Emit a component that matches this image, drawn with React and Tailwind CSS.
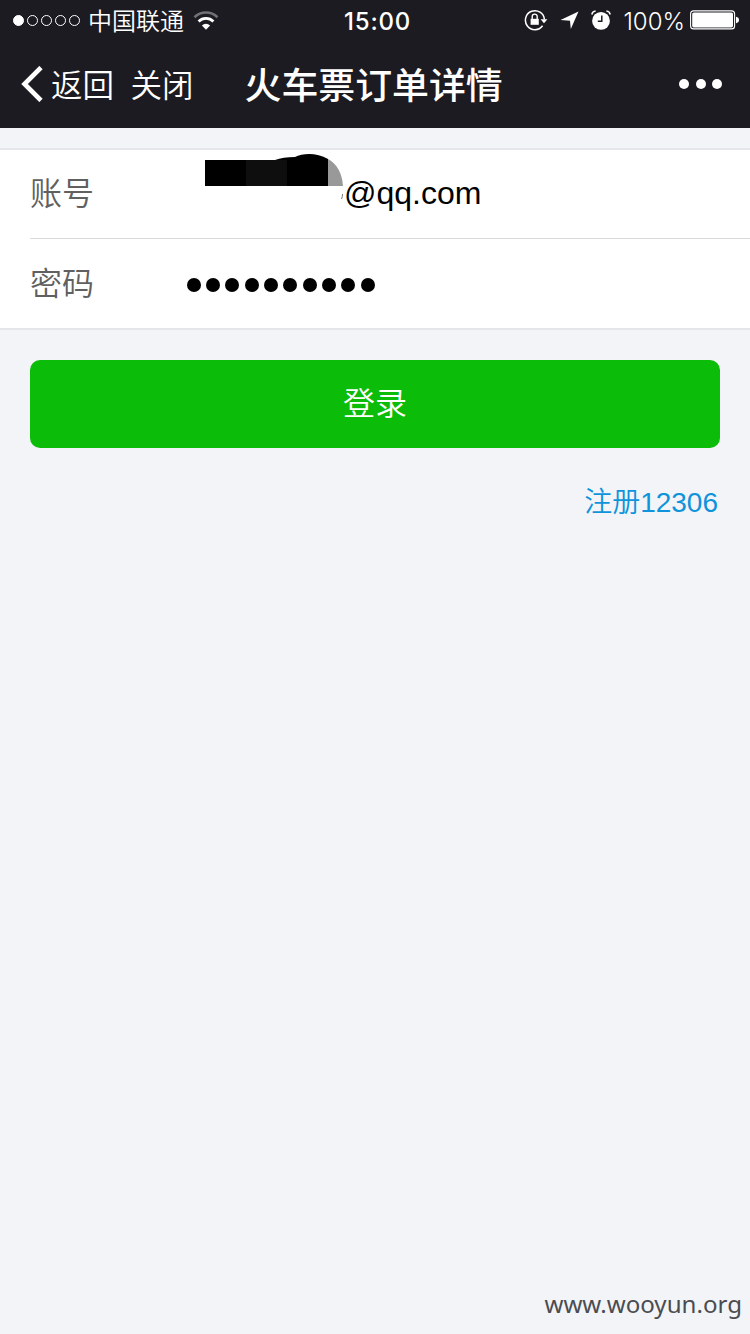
import { clsx } from "clsx";

const SIGNAL = [true, false, false, false, false];
const PASSWORD_LENGTH = 10;

export default function App() {
  return (
    <main className="flex h-[1334px] w-[750px] flex-col overflow-hidden bg-[#f2f4f8] font-['Liberation_Sans','Noto_Sans_CJK_SC',sans-serif]">
      <header className="h-32 bg-[#1c1b21] text-white">
        <StatusBar />
        <NavBar />
      </header>

      <form className="mt-5 border-y-2 border-[#e5e6e9] bg-white">
        <div className="ml-[30px] flex h-[89px] border-b border-[#d9d9d9]">
          <Label>账号</Label>
          <div className="flex pl-[79px] pt-[3px]">
            <RedactedName />
            <span className="-ml-px mt-[22px] text-[32px] leading-[36px] text-black">@qq.com</span>
          </div>
        </div>
        <div className="ml-[30px] flex h-[89px]">
          <Label>密码</Label>
          <div className="flex items-center gap-[5.35px] pl-[60.5px] pt-[3px]">
            {Array.from({ length: PASSWORD_LENGTH }, (_, i) => (
              <span key={i} className="size-[14px] rounded-full bg-black" />
            ))}
          </div>
        </div>
      </form>

      <button className="mx-[30px] mt-[30px] h-[88px] shrink-0 rounded-[10px] bg-[#0bbc09] pb-px text-[32px] font-[350] text-white">
        登录
      </button>

      <a className="mr-8 mt-9 self-end text-[28px] leading-[38px] font-[350] text-[#0f93db]">注册12306</a>

      <footer className="mt-auto self-end pb-[13px] pr-[8px] font-['Noto_Sans',sans-serif] text-[24.1px] leading-[34px] text-[#4b4c50]">
        www.wooyun.org
      </footer>
    </main>
  );
}

function StatusBar() {
  return (
    <div className="flex h-10 items-center pl-[13px] pr-[11px]">
      <div className="flex w-[331px] items-center">
        <div className="flex gap-[3px]">
          {SIGNAL.map((on, i) => (
            <span key={i} className={clsx("size-[11px] rounded-full border border-white", on && "bg-white")} />
          ))}
        </div>
        <span className="ml-[8px] pt-[3px] text-[24px] leading-10 font-[350]">中国联通</span>
        <WifiIcon />
      </div>
      <span className="pt-[3px] font-['Inter',sans-serif] text-[24px] leading-10 font-medium tracking-[0.8px]">15:00</span>
      <div className="ml-auto flex items-center">
        <RotationLockIcon />
        <LocationIcon />
        <AlarmIcon />
        <span className="ml-[12.5px] pt-[3px] font-['Inter',sans-serif] text-[24px] leading-10 font-light">100%</span>
        <BatteryIcon />
      </div>
    </div>
  );
}

function NavBar() {
  return (
    <nav className="flex h-[88px] items-center pl-[21px] pr-[28px]">
      <svg width="22" height="36" viewBox="0 0 22 36" fill="none" stroke="currentColor" strokeWidth="4.6">
        <path d="M20 1.5 3.5 18 20 34.5" />
      </svg>
      <span className="ml-[8px] pt-[5px] text-[31.5px] font-[350]">返回</span>
      <span className="ml-[16.5px] pt-[5px] text-[31.5px] font-[350]">关闭</span>
      <h1 className="ml-[51px] pt-[5px] text-[36.9px] font-medium">火车票订单详情</h1>
      <div className="ml-auto flex gap-[6.5px]">
        <span className="size-[10px] rounded-full bg-white" />
        <span className="size-[10px] rounded-full bg-white" />
        <span className="size-[10px] rounded-full bg-white" />
      </div>
    </nav>
  );
}

function Label({ children }) {
  return <label className="w-24 self-center text-[32px] font-[350] text-[#606060]">{children}</label>;
}

// Marker strokes covering the first part of the account name
function RedactedName() {
  return (
    <svg width="140" height="52" viewBox="0 0 140 52">
      <path d="M0 7h70q8-3 20-3c8-4 22-4.5 33 2v27H0z" fill="#000" />
      <path d="M41 7h41v26H41z" fill="#0e0e0e" />
      <path d="M123 6c9 5 14 14 15 27h-15z" fill="#999" />
      <path d="M137.5 41q0 3-1 5" stroke="#777" fill="none" />
    </svg>
  );
}

function WifiIcon() {
  return (
    <svg className="ml-[9px] mt-px" width="26" height="20" viewBox="0 0 26 20" fill="none">
      <path d="M1.5 6.2a16.5 16.5 0 0 1 23 0" stroke="#707075" strokeWidth="2.6" />
      <path d="M5.6 10.4a10.6 10.6 0 0 1 14.8 0" stroke="#fff" strokeWidth="2.8" />
      <path d="M13 18.8 8.9 14.5a5.9 5.9 0 0 1 8.2 0z" fill="#fff" />
    </svg>
  );
}

function RotationLockIcon() {
  return (
    <svg width="24" height="22" viewBox="0 0 24 22" fill="none">
      <path d="M18.6 16.8A9.5 9.5 0 1 1 20.4 10.5" stroke="#fff" strokeWidth="1.5" />
      <path d="M16.6 10.3h6.8L20 14.2z" fill="#fff" />
      <path d="M6.6 9.8h8.2v6H6.6z" fill="#fff" />
      <path d="M8.2 10V7.6a2.5 2.5 0 0 1 5 0V10" stroke="#fff" strokeWidth="1.4" />
    </svg>
  );
}

function LocationIcon() {
  return (
    <svg className="ml-[12px]" width="19" height="19" viewBox="0 0 19 19">
      <path d="M18.5.5 10.8 18 10 9.8.5 9z" fill="#fff" />
    </svg>
  );
}

function AlarmIcon() {
  return (
    <svg className="ml-[11.5px]" width="20" height="20" viewBox="0 0 20 20" fill="none">
      <circle cx="10" cy="10.9" r="8.9" fill="#fff" />
      <path d="M10.8 5.4v5.8H6.8" stroke="#1c1b21" strokeWidth="1.5" />
      <path d="M.9 4.8Q1.6 1.8 5 1.6M19.1 4.8Q18.4 1.8 15 1.6" stroke="#1c1b21" strokeWidth="3.4" />
      <path d="M.8 4.5Q1.4 1.4 4.6 1.1M19.2 4.5Q18.6 1.4 15.4 1.1" stroke="#fff" strokeWidth="1.5" />
    </svg>
  );
}

function BatteryIcon() {
  return (
    <svg className="ml-[5px]" width="49" height="20" viewBox="0 0 49 20" fill="none">
      <rect x=".6" y=".9" width="44" height="18" rx="3" stroke="#fff" strokeWidth="1.1" />
      <rect x="2.2" y="2.4" width="40.8" height="15" rx="1.6" fill="#fff" />
      <path d="M46 6.8c2 .3 3 1.5 3 3.2s-1 2.9-3 3.2z" fill="#fff" />
    </svg>
  );
}
